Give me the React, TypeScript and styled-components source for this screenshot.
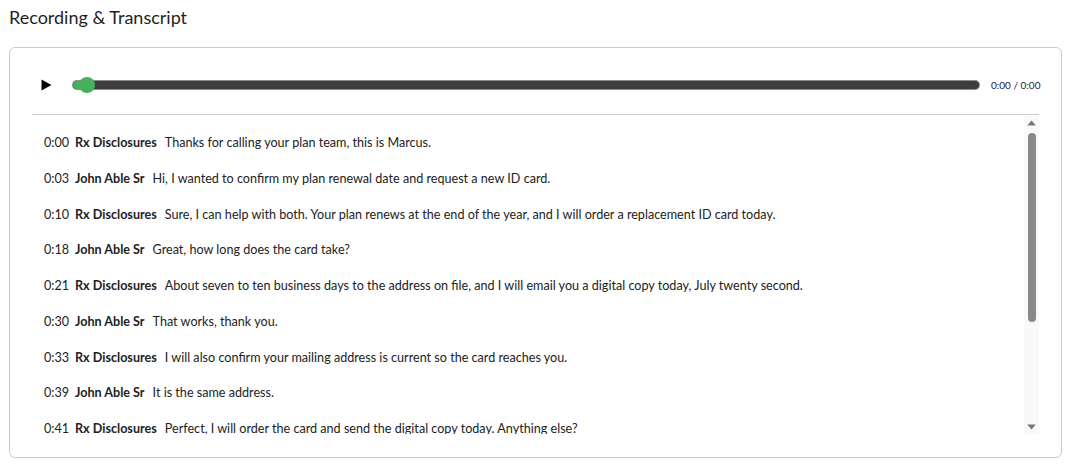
import * as React from "react";
import styled, { createGlobalStyle } from "styled-components";

const GlobalStyle = createGlobalStyle`
    html, body {
        margin: 0;
        padding: 0;
        background: #fff;
    }
    body {
        font-family: Lato, "Open Sans", "Liberation Sans", sans-serif;
        color: #222;
    }
`;

const Page = styled.div`
    padding: 0 10px 0 9px;
`;

const Title = styled.h2`
    margin: 0;
    padding: 6px 0 0;
    height: 47px;
    box-sizing: border-box;
    font-size: 18px;
    font-weight: 400;
    line-height: 22px;
    color: #1f1f1f;
`;

const Card = styled.div`
    border: 1px solid #c9ccd1;
    border-radius: 6px;
    padding: 23px 22px 23px;
    height: 411px;
    box-sizing: border-box;
    display: flex;
    flex-direction: column;
`;

const Player = styled.div`
    display: flex;
    align-items: center;
    height: 28px;
    gap: 12px;
    padding-bottom: 15px;
    border-bottom: 1px solid #c9ccd1;
`;

const PlayButton = styled.button`
    width: 29px;
    height: 28px;
    padding: 0;
    border: 0;
    background: none;
    display: flex;
    align-items: center;
    justify-content: center;
    cursor: pointer;
`;

const Track = styled.div`
    position: relative;
    flex: 1;
    height: 8px;
    border-radius: 4px;
    background: #3d3d3d;
    box-shadow: 0 0 0 1px #8a8a8a;
`;

const Progress = styled.div`
    position: absolute;
    left: 0;
    top: 0;
    bottom: 0;
    border-radius: 4px;
    background: #47b05c;
`;

const Thumb = styled.div`
    position: absolute;
    top: 50%;
    width: 16px;
    height: 16px;
    margin: -8px 0 0 -8px;
    border-radius: 50%;
    background: #47b05c;
`;

const Clock = styled.span`
    width: 48px;
    font-size: 10px;
    color: #22223a;
    white-space: nowrap;
`;

const TranscriptFrame = styled.div`
    flex: 1;
    min-height: 0;
    display: flex;
    margin-top: 1px;
`;

const Transcript = styled.div`
    flex: 1;
    min-width: 0;
    overflow: hidden;
    padding: 9px 0 4px 12px;
`;

const ScrollRail = styled.div`
    width: 15px;
    flex: none;
    display: flex;
    flex-direction: column;
    background: #f9f9f9;
`;

const RailButton = styled.div`
    height: 14px;
    flex: none;
    display: flex;
    align-items: center;
    justify-content: center;
`;

const RailTrack = styled.div`
    flex: 1;
    min-height: 0;
    padding: 3px 0;
    box-sizing: border-box;
`;

const RailThumb = styled.div`
    width: 8px;
    margin: 0 auto;
    border-radius: 4px;
    background: #8a8a8a;
`;

const Line = styled.div`
    display: flex;
    align-items: baseline;
    padding: 9px 0;
    font-size: 12.6px;
    line-height: 17.75px;
    color: #222;
    white-space: nowrap;
`;

const Stamp = styled.span`
    width: 31px;
    flex: none;
`;

const Speaker = styled.span`
    font-weight: 700;
    margin-right: 8px;
`;

interface Entry {
    at: string;
    who: string;
    text: string;
}

const AGENT = "Rx Disclosures";
const MEMBER = "John Able Sr";

const entries: Entry[] = [
    { at: "0:00", who: AGENT, text: "Thanks for calling your plan team, this is Marcus." },
    { at: "0:03", who: MEMBER, text: "Hi, I wanted to confirm my plan renewal date and request a new ID card." },
    { at: "0:10", who: AGENT, text: "Sure, I can help with both. Your plan renews at the end of the year, and I will order a replacement ID card today." },
    { at: "0:18", who: MEMBER, text: "Great, how long does the card take?" },
    { at: "0:21", who: AGENT, text: "About seven to ten business days to the address on file, and I will email you a digital copy today, July twenty second." },
    { at: "0:30", who: MEMBER, text: "That works, thank you." },
    { at: "0:33", who: AGENT, text: "I will also confirm your mailing address is current so the card reaches you." },
    { at: "0:39", who: MEMBER, text: "It is the same address." },
    { at: "0:41", who: AGENT, text: "Perfect, I will order the card and send the digital copy today. Anything else?" },
    { at: "0:46", who: MEMBER, text: "No, that is everything." },
    { at: "0:48", who: AGENT, text: "Thanks for calling, have a great day." },
    { at: "0:51", who: MEMBER, text: "You too, bye." },
    { at: "0:53", who: AGENT, text: "Goodbye." },
];

const PlayIcon = () => (
    <svg width="11" height="12" viewBox="0 0 11 12">
        <path d="M0.5 0.5 L10.5 6 L0.5 11.5 Z" fill="#000" />
    </svg>
);

const Arrow = ({ down }: { down?: boolean }) => (
    <svg width="9" height="6" viewBox="0 0 9 6">
        <path d={down ? "M0.2 0.5 L8.8 0.5 L4.5 5.5 Z" : "M4.5 0.5 L8.8 5.5 L0.2 5.5 Z"} fill="#777" />
    </svg>
);

const App = () => {
    const position = 0.016;
    const listRef = React.useRef<HTMLDivElement>(null);
    const trackRef = React.useRef<HTMLDivElement>(null);
    const [thumbHeight, setThumbHeight] = React.useState(190);

    // size the rail thumb from how much of the transcript is in view
    React.useLayoutEffect(() => {
        const list = listRef.current;
        const track = trackRef.current;
        if (!list || !track) return;
        const usable = track.clientHeight - 6;
        setThumbHeight(Math.round((usable * list.clientHeight) / list.scrollHeight));
    }, []);

    return (
        <Page>
            <GlobalStyle />
            <Title>Recording &amp; Transcript</Title>
            <Card>
                <Player>
                    <PlayButton aria-label="Play">
                        <PlayIcon />
                    </PlayButton>
                    <Track>
                        <Progress style={{ width: `${position * 100}%` }} />
                        <Thumb style={{ left: `${position * 100}%` }} />
                    </Track>
                    <Clock>0:00 / 0:00</Clock>
                </Player>
                <TranscriptFrame>
                    <Transcript ref={listRef}>
                        {entries.map((e, i) => (
                            <Line key={i}>
                                <Stamp>{e.at}</Stamp>
                                <Speaker>{e.who}</Speaker>
                                <span>{e.text}</span>
                            </Line>
                        ))}
                    </Transcript>
                    <ScrollRail>
                        <RailButton>
                            <Arrow />
                        </RailButton>
                        <RailTrack ref={trackRef}>
                            <RailThumb style={{ height: thumbHeight }} />
                        </RailTrack>
                        <RailButton>
                            <Arrow down />
                        </RailButton>
                    </ScrollRail>
                </TranscriptFrame>
            </Card>
        </Page>
    );
};

export default App;
